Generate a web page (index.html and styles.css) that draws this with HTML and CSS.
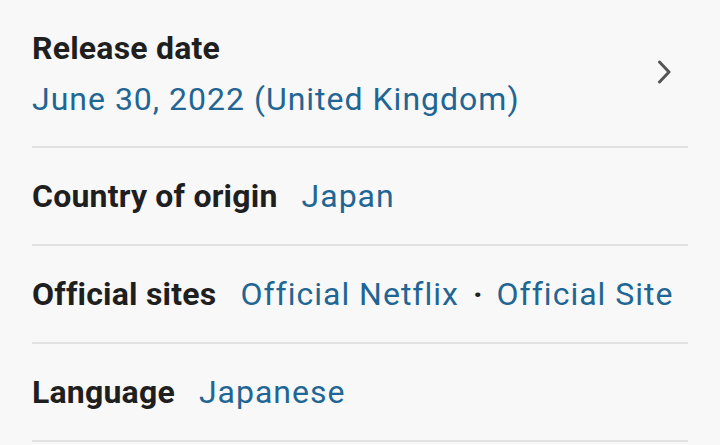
FILE: index.html
```html
<!DOCTYPE html>
<html lang="en">
<head>
    <meta charset="UTF-8">
    <meta name="viewport" content="width=device-width, initial-scale=1.0">
    <title>Details</title>
    <link rel="stylesheet" href="styles.css">
</head>
<body>
    <div class="details">
        <div class="row row-stack">
            <div class="row-text">
                <span class="label">Release date</span>
                <a class="value" href="#">June 30, 2022 (United Kingdom)</a>
            </div>
            <svg class="chevron" width="16" height="24" viewBox="0 0 16 24">
                <path d="M2.5 2 L12 12 L2.5 22" fill="none" stroke="#555" stroke-width="3" stroke-linecap="round" stroke-linejoin="round"/>
            </svg>
        </div>
        <div class="row">
            <span class="label">Country of origin</span>
            <a class="value" href="#">Japan</a>
        </div>
        <div class="row">
            <span class="label">Official sites</span>
            <a class="value" href="#">Official Netflix</a>
            <span class="dot">·</span>
            <a class="value" href="#">Official Site</a>
        </div>
        <div class="row">
            <span class="label">Language</span>
            <a class="value" href="#">Japanese</a>
        </div>
    </div>
</body>
</html>
```
FILE: styles.css
```css
body {
    margin: 0;
    padding: 0;
    background: #f8f8f8;
    font-family: Roboto, "Liberation Sans", sans-serif;
    font-size: 32px;
}
.details {
    padding: 0 32px;
}
.row {
    display: flex;
    align-items: center;
    height: 96px;
    border-bottom: 2px solid #e2e2e2;
}
.row-stack {
    height: 146px;
    justify-content: space-between;
}
.row-text {
    display: flex;
    flex-direction: column;
    line-height: 51px;
    padding-top: 2px;
}
.label {
    font-weight: 700;
    color: #1f1f1f;
    letter-spacing: 0.2px;
    margin-right: 24px;
}
.value {
    color: #1f6694;
    text-decoration: none;
    letter-spacing: 1px;
}
.dot {
    color: #222;
    margin: 0 14px;
    font-weight: 700;
}
.chevron {
    margin-right: 15px;
    margin-top: -2px;
}
```
